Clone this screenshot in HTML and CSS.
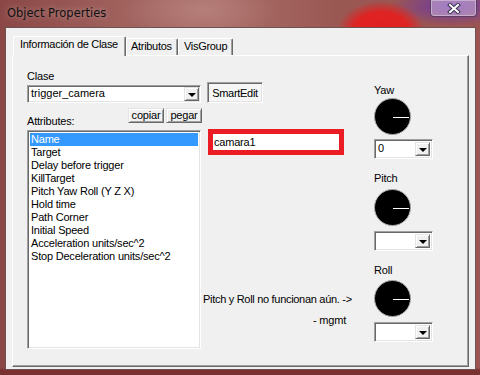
FILE: index.html
```html
<!DOCTYPE html>
<html lang="es">
<head>
  <meta charset="UTF-8">
  <title>Object Properties</title>
  <link rel="stylesheet" href="styles.css">
</head>
<body>

  <div class="titlebar">
    <span class="title">Object Properties</span>
    <span class="close">
      <svg width="14" height="11" viewBox="0 0 14 11">
        <path d="M3 2 L11 9 M11 2 L3 9" stroke="#3a3050" stroke-width="4" stroke-linecap="square"/>
        <path d="M3 2 L11 9 M11 2 L3 9" stroke="#ffffff" stroke-width="2" stroke-linecap="square"/>
      </svg>
    </span>
  </div>

  <div class="client">
    <div class="tabs">
      <div class="tab tab-active">Información de Clase</div>
      <div class="tab tab-attr">Atributos</div>
      <div class="tab tab-vis">VisGroup</div>
    </div>

    <div class="panel">
      <div class="col-left">
        <div class="label">Clase</div>
        <div class="combo combo-class">
          <span class="combo-text">trigger_camera</span>
          <span class="drop"></span>
        </div>
        <div class="attr-row">
          <span class="label">Attributes:</span>
          <div class="btns">
            <button class="btn btn-copy">copiar</button>
            <button class="btn btn-paste">pegar</button>
          </div>
        </div>
        <ul class="listbox">
          <li class="selected">Name</li>
          <li>Target</li>
          <li>Delay before trigger</li>
          <li>KillTarget</li>
          <li>Pitch Yaw Roll (Y Z X)</li>
          <li>Hold time</li>
          <li>Path Corner</li>
          <li>Initial Speed</li>
          <li>Acceleration units/sec^2</li>
          <li>Stop Deceleration units/sec^2</li>
        </ul>
      </div>

      <div class="col-mid">
        <button class="smartedit">SmartEdit</button>
        <div class="redbox"><input class="value-input" type="text" value="camara1"></div>
        <p class="note">Pitch y Roll no funcionan aún. -&gt;</p>
        <p class="sig">- mgmt</p>
      </div>

      <div class="col-right">
        <div class="label">Yaw</div>
        <svg class="dial dial-yaw" width="37" height="37" viewBox="0 0 37 37">
          <circle cx="18.5" cy="18.5" r="18" fill="#000" stroke="#a8a8a8" stroke-width="1"/>
          <line x1="19" y1="19.5" x2="35" y2="19.5" stroke="#fff" stroke-width="1"/>
        </svg>
        <div class="combo combo-angle"><span class="combo-text">0</span><span class="drop"></span></div>

        <div class="label label-gap">Pitch</div>
        <svg class="dial dial-pitch" width="37" height="37" viewBox="0 0 37 37">
          <circle cx="18.5" cy="18.5" r="18" fill="#000" stroke="#a8a8a8" stroke-width="1"/>
          <line x1="19" y1="19.5" x2="35" y2="19.5" stroke="#fff" stroke-width="1"/>
        </svg>
        <div class="combo combo-angle combo-low"><span class="combo-text"></span><span class="drop"></span></div>

        <div class="label label-gap">Roll</div>
        <svg class="dial dial-roll" width="37" height="37" viewBox="0 0 37 37">
          <circle cx="18.5" cy="18.5" r="18" fill="#000" stroke="#a8a8a8" stroke-width="1"/>
          <line x1="19" y1="19.5" x2="35" y2="19.5" stroke="#fff" stroke-width="1"/>
        </svg>
        <div class="combo combo-angle combo-low"><span class="combo-text"></span><span class="drop"></span></div>
      </div>
    </div>
  </div>

</body>
</html>
```

FILE: styles.css
```css
html, body {
  margin: 0;
  width: 480px;
  height: 375px;
  overflow: hidden;
}
body {
  font-family: "Liberation Sans", Arial, sans-serif;
  font-size: 11px;
  color: #000;
  background:
    radial-gradient(ellipse 44px 30px at 381px 31px, #e22020 0%, #df2323 62%, rgba(200, 45, 45, 0) 100%),
    radial-gradient(ellipse 60px 20px at 452px 6px, #6a38a8 0%, rgba(106, 56, 168, 0) 100%),
    radial-gradient(ellipse 80px 30px at 200px 10px, rgba(190, 140, 135, 0.6), rgba(190, 140, 135, 0)),
    linear-gradient(180deg, rgba(0, 0, 0, 0) 0, rgba(0, 0, 0, 0) 368px, #7a2f30 370px),
    linear-gradient(90deg, #8a4746 0, #a0615d 25%, #a96c67 45%, #9a5853 70%, #9b5452 100%);
}

/* title bar */
.titlebar {
  height: 27px;
  display: flex;
  align-items: flex-start;
}
.title {
  font-family: "DejaVu Sans", "Liberation Sans", sans-serif;
  font-size: 11.5px;
  margin: 6px 0 0 7px;
  color: #111;
  text-shadow: 0 0 6px rgba(255, 255, 255, 0.45);
}
.close {
  margin-left: auto;
  margin-right: 3px;
  width: 47px;
  height: 17px;
  box-sizing: border-box;
  border: 1px solid rgba(60, 30, 70, 0.7);
  border-top: none;
  border-radius: 0 0 4px 4px;
  background: rgba(205, 180, 220, 0.55);
  box-shadow: inset 0 0 0 1px rgba(255, 255, 255, 0.35);
  display: flex;
  justify-content: center;
  align-items: center;
}

/* client area */
.client {
  box-sizing: border-box;
  margin-left: 5px;
  width: 471px;
  height: 343px;
  border: 1px solid #6e5250;
  background: #f0f0f0;
  padding: 8px 6px 0 6px;
}
.tabs {
  display: flex;
  align-items: flex-end;
  height: 19px;
  padding-left: 1px;
  position: relative;
  z-index: 1;
}
.tab {
  box-sizing: border-box;
  height: 17px;
  padding: 1px 0 0 4px;
  line-height: 13px;
  letter-spacing: -0.3px;
  border: 1px solid #fff;
  border-right-color: #696969;
  border-bottom: none;
  box-shadow: inset -1px 0 #a0a0a0;
  border-radius: 2px 2px 0 0;
  background: #f0f0f0;
  white-space: nowrap;
}
.tab-active {
  width: 113px;
  height: 20px;
  margin-bottom: -1px;
  padding: 1px 0 0 6px;
}
.tab-attr {
  width: 52px;
}
.tab-vis {
  width: 55px;
  padding-left: 5px;
}

.panel {
  box-sizing: border-box;
  height: 312px;
  border: 1px solid;
  border-color: #fff #696969 #696969 #fff;
  box-shadow: inset -1px -1px #a0a0a0;
  padding: 14px 0 0 14px;
  display: flex;
}
.label {
  line-height: 13px;
  letter-spacing: -0.2px;
}

/* left column */
.col-left {
  width: 174px;
  display: flex;
  flex-direction: column;
}
.combo {
  box-sizing: border-box;
  display: flex;
  background: #fff;
  border: 1px solid;
  border-color: #a0a0a0 #fff #fff #a0a0a0;
  box-shadow: inset 1px 1px #696969, inset -1px -1px #e3e3e3;
  padding: 2px;
}
.combo-text {
  flex: 1;
  line-height: 13px;
  padding-left: 1px;
}
.drop {
  box-sizing: border-box;
  width: 15px;
  border: 1px solid;
  border-color: #e3e3e3 #696969 #696969 #e3e3e3;
  box-shadow: inset 1px 1px #fff, inset -1px -1px #a0a0a0;
  background: #f0f0f0;
  display: flex;
  justify-content: center;
  align-items: center;
}
.drop::after {
  content: "";
  border-left: 4px solid transparent;
  border-right: 4px solid transparent;
  border-top: 4px solid #000;
  margin-top: 1px;
}
.combo-class {
  margin-top: 2px;
  height: 18px;
  padding: 1px 1px 1px 2px;
}
.attr-row {
  margin-top: 5px;
  height: 20px;
  display: flex;
  justify-content: space-between;
}
.attr-row .label {
  align-self: flex-end;
}
.btns {
  display: flex;
  gap: 2px;
  margin-right: -1px;
}
.btn {
  box-sizing: border-box;
  font: inherit;
  letter-spacing: -0.2px;
  height: 15px;
  padding: 0;
  line-height: 11px;
  background: #f0f0f0;
  border: 1px solid;
  border-color: #e3e3e3 #696969 #696969 #e3e3e3;
  box-shadow: inset 1px 1px #fff, inset -1px -1px #a0a0a0;
}
.btn-copy {
  width: 36px;
}
.btn-paste {
  width: 36px;
}
.listbox {
  box-sizing: border-box;
  list-style: none;
  margin: 2px 0 0 0;
  padding: 1px 1px 0 1px;
  height: 219px;
  background: #fff;
  border: 1px solid;
  border-color: #a0a0a0 #fff #fff #a0a0a0;
  box-shadow: inset 1px 1px #696969, inset -1px -1px #e3e3e3;
}
.listbox li {
  line-height: 13px;
  padding-left: 1px;
  margin: 0 1px;
  letter-spacing: -0.2px;
  white-space: nowrap;
}
.listbox li:first-child {
  margin-top: 1px;
}
.listbox .selected {
  background: #3399ff;
  color: #fff;
}

/* middle column */
.col-mid {
  width: 170px;
  padding-left: 2px;
  display: flex;
  flex-direction: column;
  align-items: flex-start;
}
.smartedit {
  box-sizing: border-box;
  font: inherit;
  letter-spacing: -0.3px;
  margin: 12px 0 0 4px;
  width: 56px;
  height: 21px;
  padding: 0;
  border: 1px solid;
  border-color: #a0a0a0 #fff #fff #a0a0a0;
  box-shadow: inset 1px 1px #696969, inset -1px -1px #e3e3e3;
  background: #f6f6f6;
}
.redbox {
  box-sizing: border-box;
  margin: 26px 0 0 5px;
  width: 136px;
  height: 26px;
  border: 5px solid #ec1c24;
  background: #fff;
}
.value-input {
  box-sizing: border-box;
  width: 100%;
  height: 100%;
  border: none;
  padding: 0 0 0 1px;
  font: inherit;
  letter-spacing: -0.2px;
  outline: none;
  background: #fff;
}
.note {
  margin: 138px 0 0 0;
  line-height: 13px;
  letter-spacing: -0.3px;
}
.sig {
  margin: 8px 0 0 110px;
  line-height: 13px;
  letter-spacing: -0.2px;
}

/* right column */
.col-right {
  width: 59px;
  padding-left: 1px;
  display: flex;
  flex-direction: column;
  align-items: flex-start;
}
.col-right > .label:first-child {
  margin-top: 14px;
}
.label-gap {
  margin-top: 13px;
}
.dial {
  display: block;
}
.dial-yaw {
  margin-top: 1px;
}
.dial-pitch {
  margin-top: 4px;
}
.dial-roll {
  margin-top: 3px;
}
.combo-angle {
  margin-top: 4px;
  width: 59px;
  height: 20px;
}
.combo-low {
  margin-top: 5px;
}
```
